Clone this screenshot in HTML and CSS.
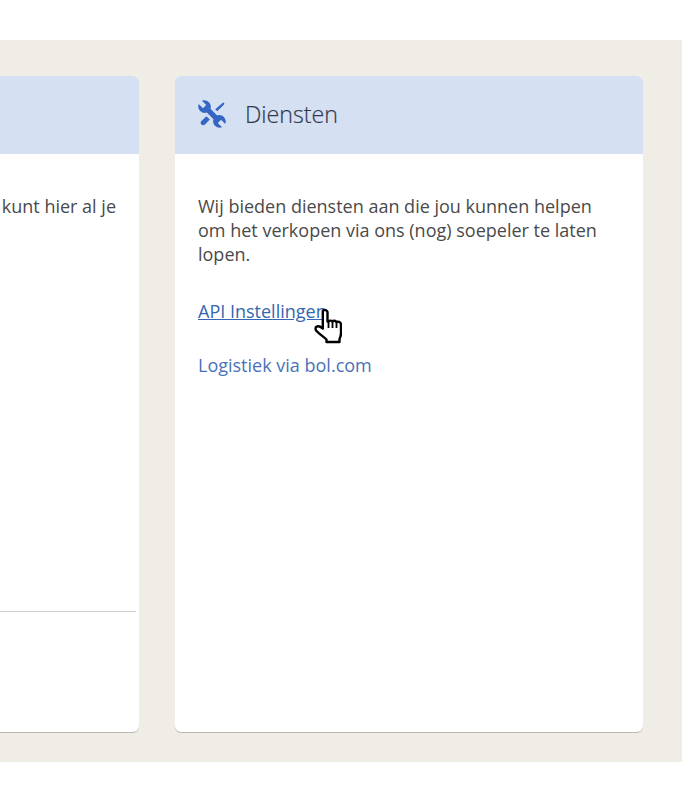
FILE: index.html
```html
<!DOCTYPE html>
<html lang="nl">
<head>
<meta charset="utf-8">
<title>Diensten</title>
<link rel="stylesheet" href="styles.css">
</head>
<body>
<main class="band">
  <section class="card">
    <header class="card-head"></header>
    <div class="card-body card-body-clipped">
      <p class="intro intro-end">kunt hier al je</p>
      <div class="rule"></div>
    </div>
  </section>
  <section class="card">
    <header class="card-head">
      <svg class="tools" viewBox="0 0 28 28" aria-hidden="true">
        <g transform="rotate(-45 14 14)">
          <path class="tool" d="M11.700 -2.500V3.500H16.300V-2.500C18.800 -1.500 20.200 1 20.200 3.500 20.200 6 18.800 8.300 16.600 9.300V18.700C18.800 19.700 20.200 22 20.200 24.500 20.200 27 18.800 29.500 16.300 30.500V24.500H11.700V30.500C9.200 29.500 7.800 27 7.800 24.500 7.800 22 9.200 19.700 11.400 18.700V9.300C9.200 8.300 7.800 6 7.800 3.500 7.800 1 9.200 -1.500 11.700 -2.500Z"/>
        </g>
        <path class="tool" d="M17.200 9.200 24.200 3.200 25.800 2.600 26.400 3.400 25.600 5 19.200 11.200Z"/>
        <path class="tool" d="M8.400 16.200 11.800 19.600 7 24.600C6 25.600 4.400 25.600 3.400 24.600 2.400 23.600 2.400 22 3.400 21Z"/>
      </svg>
      <h2 class="card-title">Diensten</h2>
    </header>
    <div class="card-body">
      <p class="intro">Wij bieden diensten aan die jou kunnen helpen om het verkopen via ons (nog) soepeler te laten lopen.</p>
      <ul class="links">
        <li><a class="link link-hover" href="#">API Instellingen</a></li>
        <li><a class="link" href="#">Logistiek via bol.com</a></li>
      </ul>
    </div>
  </section>
  <svg class="cursor" viewBox="0 0 28 36" aria-hidden="true">
    <path class="cursor-hand" d="M9 2.500C10.500 1.500 13 2 13.500 4V13.500H14.500C15.500 12.300 17.500 12.300 18.500 13.500 19.500 12.500 21.500 12.500 22.500 14 24 13.300 26.500 14 27 16V25C27 28 26 29.500 25.500 31V34H12.500V31.500C10 29 6 26.500 3 23.500 1 21.500 1 19 3 18.500 4.500 18 7 19 8.800 20.500V3.500Z"/>
    <path class="cursor-line" d="M14.500 13.500V20M18.500 13.500V20M22.500 14V20"/>
  </svg>
</main>
</body>
</html>
```

FILE: styles.css
```css
* {
  box-sizing: border-box;
}

html,
body {
  margin: 0;
  height: 791px;
  background: #ffffff;
  overflow: hidden;
}

body {
  padding-top: 40px;
  font-family: "Open Sans", "Noto Sans", sans-serif;
  color: #4a4a4a;
}

.band {
  position: relative;
  display: flex;
  justify-content: flex-end;
  gap: 36px;
  height: 722px;
  padding: 36px 39px 30px 0;
  background: #f0ede7;
  overflow: hidden;
}

.card {
  flex: 0 0 468px;
  display: flex;
  flex-direction: column;
  background: #ffffff;
  border-radius: 6px;
  box-shadow: 0 1px 0 #b9b9ad;
  overflow: hidden;
}

.card-head {
  flex: 0 0 78px;
  display: flex;
  align-items: center;
  gap: 19px;
  padding: 0 23px 2px;
  background: #d5e0f3;
}

.tools {
  width: 28px;
  height: 28px;
  flex: none;
  overflow: visible;
}

.tool {
  fill: #3566c4;
}

.card-title {
  margin: 0;
  font-size: 23.200px;
  font-weight: 300;
  line-height: 30px;
  color: #30394d;
  -webkit-text-stroke: 0.200px #30394d;
}

.card-body {
  flex: 1;
  display: flex;
  flex-direction: column;
  padding: 40px 23px 0;
}

.card-body-clipped {
  padding-right: 0;
}

.intro {
  margin: 0;
  font-size: 18px;
  line-height: 24px;
}

.intro-end {
  padding-right: 23px;
  text-align: right;
}

.rule {
  height: 1px;
  margin-top: 393px;
  margin-right: 3px;
  background: #cfcfcb;
}

.links {
  margin: 33px 0 0;
  padding: 0;
  list-style: none;
  display: flex;
  flex-direction: column;
  gap: 30px;
  font-size: 18px;
  line-height: 24px;
}

.link {
  color: #4a72b8;
  text-decoration: none;
}

.link-hover {
  color: #3566b0;
  text-decoration: underline;
}

.cursor {
  position: absolute;
  left: 314px;
  top: 268px;
  width: 28px;
  height: 36px;
}

.cursor-hand {
  fill: #ffffff;
  stroke: #000000;
  stroke-width: 2.400;
  stroke-linejoin: round;
}

.cursor-line {
  fill: none;
  stroke: #000000;
  stroke-width: 1.800;
}
```
